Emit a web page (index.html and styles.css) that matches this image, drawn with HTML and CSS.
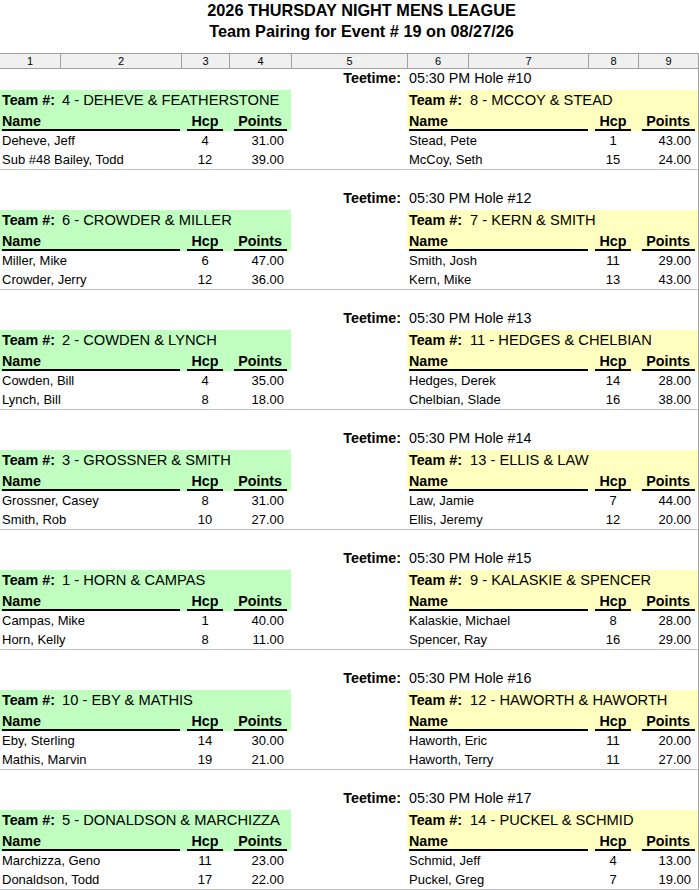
FILE: index.html
```html
<!DOCTYPE html>
<html lang="en">
<head>
<meta charset="utf-8">
<title>Team Pairing for Event # 19</title>
<link rel="stylesheet" href="styles.css">
</head>
<body>
<div class="page">
  <header class="title">
    <div class="title-line">2026 THURSDAY NIGHT MENS LEAGUE</div>
    <div class="title-line">Team Pairing for Event # 19 on 08/27/26</div>
  </header>
  <div class="sheet">
    <div class="ruler">
      <div class="rcell">1</div><div class="rcell">2</div><div class="rcell">3</div><div class="rcell">4</div><div class="rcell">5</div><div class="rcell">6</div><div class="rcell">7</div><div class="rcell">8</div><div class="rcell">9</div>
    </div>

    <section class="block">
      <div class="teetime"><span class="tt-label">Teetime:</span><span class="tt-value">05:30 PM Hole #10</span></div>
      <div class="teams">
        <div class="team left">
          <div class="team-head green"><div class="row team-row"><span class="lbl">Team #:</span><span class="tname">4 - DEHEVE &amp; FEATHERSTONE</span></div>
          <div class="row hdr-row"><span class="h-name"><span class="ul">Name</span></span><span class="h-hcp"><span class="ul w-hcp">Hcp</span></span><span class="h-pts"><span class="ul w-pts">Points</span></span></div></div>
          <div class="row p-row"><span class="p-name">Deheve, Jeff</span><span class="p-hcp">4</span><span class="p-pts">31.00</span></div>
          <div class="row p-row"><span class="p-name">Sub #48 Bailey, Todd</span><span class="p-hcp">12</span><span class="p-pts">39.00</span></div>
        </div>
        <div class="gapcol"></div>
        <div class="team right">
          <div class="team-head yellow"><div class="row team-row"><span class="lbl">Team #:</span><span class="tname">8 - MCCOY &amp; STEAD</span></div>
          <div class="row hdr-row"><span class="h-name"><span class="ul">Name</span></span><span class="h-hcp"><span class="ul w-hcp">Hcp</span></span><span class="h-pts"><span class="ul w-pts">Points</span></span></div></div>
          <div class="row p-row"><span class="p-name">Stead, Pete</span><span class="p-hcp">1</span><span class="p-pts">43.00</span></div>
          <div class="row p-row"><span class="p-name">McCoy, Seth</span><span class="p-hcp">15</span><span class="p-pts">24.00</span></div>
        </div>
      </div>
      <div class="sep"></div>
    </section>

    <section class="block">
      <div class="teetime"><span class="tt-label">Teetime:</span><span class="tt-value">05:30 PM Hole #12</span></div>
      <div class="teams">
        <div class="team left">
          <div class="team-head green"><div class="row team-row"><span class="lbl">Team #:</span><span class="tname">6 - CROWDER &amp; MILLER</span></div>
          <div class="row hdr-row"><span class="h-name"><span class="ul">Name</span></span><span class="h-hcp"><span class="ul w-hcp">Hcp</span></span><span class="h-pts"><span class="ul w-pts">Points</span></span></div></div>
          <div class="row p-row"><span class="p-name">Miller, Mike</span><span class="p-hcp">6</span><span class="p-pts">47.00</span></div>
          <div class="row p-row"><span class="p-name">Crowder, Jerry</span><span class="p-hcp">12</span><span class="p-pts">36.00</span></div>
        </div>
        <div class="gapcol"></div>
        <div class="team right">
          <div class="team-head yellow"><div class="row team-row"><span class="lbl">Team #:</span><span class="tname">7 - KERN &amp; SMITH</span></div>
          <div class="row hdr-row"><span class="h-name"><span class="ul">Name</span></span><span class="h-hcp"><span class="ul w-hcp">Hcp</span></span><span class="h-pts"><span class="ul w-pts">Points</span></span></div></div>
          <div class="row p-row"><span class="p-name">Smith, Josh</span><span class="p-hcp">11</span><span class="p-pts">29.00</span></div>
          <div class="row p-row"><span class="p-name">Kern, Mike</span><span class="p-hcp">13</span><span class="p-pts">43.00</span></div>
        </div>
      </div>
      <div class="sep"></div>
    </section>

    <section class="block">
      <div class="teetime"><span class="tt-label">Teetime:</span><span class="tt-value">05:30 PM Hole #13</span></div>
      <div class="teams">
        <div class="team left">
          <div class="team-head green"><div class="row team-row"><span class="lbl">Team #:</span><span class="tname">2 - COWDEN &amp; LYNCH</span></div>
          <div class="row hdr-row"><span class="h-name"><span class="ul">Name</span></span><span class="h-hcp"><span class="ul w-hcp">Hcp</span></span><span class="h-pts"><span class="ul w-pts">Points</span></span></div></div>
          <div class="row p-row"><span class="p-name">Cowden, Bill</span><span class="p-hcp">4</span><span class="p-pts">35.00</span></div>
          <div class="row p-row"><span class="p-name">Lynch, Bill</span><span class="p-hcp">8</span><span class="p-pts">18.00</span></div>
        </div>
        <div class="gapcol"></div>
        <div class="team right">
          <div class="team-head yellow"><div class="row team-row"><span class="lbl">Team #:</span><span class="tname">11 - HEDGES &amp; CHELBIAN</span></div>
          <div class="row hdr-row"><span class="h-name"><span class="ul">Name</span></span><span class="h-hcp"><span class="ul w-hcp">Hcp</span></span><span class="h-pts"><span class="ul w-pts">Points</span></span></div></div>
          <div class="row p-row"><span class="p-name">Hedges, Derek</span><span class="p-hcp">14</span><span class="p-pts">28.00</span></div>
          <div class="row p-row"><span class="p-name">Chelbian, Slade</span><span class="p-hcp">16</span><span class="p-pts">38.00</span></div>
        </div>
      </div>
      <div class="sep"></div>
    </section>

    <section class="block">
      <div class="teetime"><span class="tt-label">Teetime:</span><span class="tt-value">05:30 PM Hole #14</span></div>
      <div class="teams">
        <div class="team left">
          <div class="team-head green"><div class="row team-row"><span class="lbl">Team #:</span><span class="tname">3 - GROSSNER &amp; SMITH</span></div>
          <div class="row hdr-row"><span class="h-name"><span class="ul">Name</span></span><span class="h-hcp"><span class="ul w-hcp">Hcp</span></span><span class="h-pts"><span class="ul w-pts">Points</span></span></div></div>
          <div class="row p-row"><span class="p-name">Grossner, Casey</span><span class="p-hcp">8</span><span class="p-pts">31.00</span></div>
          <div class="row p-row"><span class="p-name">Smith, Rob</span><span class="p-hcp">10</span><span class="p-pts">27.00</span></div>
        </div>
        <div class="gapcol"></div>
        <div class="team right">
          <div class="team-head yellow"><div class="row team-row"><span class="lbl">Team #:</span><span class="tname">13 - ELLIS &amp; LAW</span></div>
          <div class="row hdr-row"><span class="h-name"><span class="ul">Name</span></span><span class="h-hcp"><span class="ul w-hcp">Hcp</span></span><span class="h-pts"><span class="ul w-pts">Points</span></span></div></div>
          <div class="row p-row"><span class="p-name">Law, Jamie</span><span class="p-hcp">7</span><span class="p-pts">44.00</span></div>
          <div class="row p-row"><span class="p-name">Ellis, Jeremy</span><span class="p-hcp">12</span><span class="p-pts">20.00</span></div>
        </div>
      </div>
      <div class="sep"></div>
    </section>

    <section class="block">
      <div class="teetime"><span class="tt-label">Teetime:</span><span class="tt-value">05:30 PM Hole #15</span></div>
      <div class="teams">
        <div class="team left">
          <div class="team-head green"><div class="row team-row"><span class="lbl">Team #:</span><span class="tname">1 - HORN &amp; CAMPAS</span></div>
          <div class="row hdr-row"><span class="h-name"><span class="ul">Name</span></span><span class="h-hcp"><span class="ul w-hcp">Hcp</span></span><span class="h-pts"><span class="ul w-pts">Points</span></span></div></div>
          <div class="row p-row"><span class="p-name">Campas, Mike</span><span class="p-hcp">1</span><span class="p-pts">40.00</span></div>
          <div class="row p-row"><span class="p-name">Horn, Kelly</span><span class="p-hcp">8</span><span class="p-pts">11.00</span></div>
        </div>
        <div class="gapcol"></div>
        <div class="team right">
          <div class="team-head yellow"><div class="row team-row"><span class="lbl">Team #:</span><span class="tname">9 - KALASKIE &amp; SPENCER</span></div>
          <div class="row hdr-row"><span class="h-name"><span class="ul">Name</span></span><span class="h-hcp"><span class="ul w-hcp">Hcp</span></span><span class="h-pts"><span class="ul w-pts">Points</span></span></div></div>
          <div class="row p-row"><span class="p-name">Kalaskie, Michael</span><span class="p-hcp">8</span><span class="p-pts">28.00</span></div>
          <div class="row p-row"><span class="p-name">Spencer, Ray</span><span class="p-hcp">16</span><span class="p-pts">29.00</span></div>
        </div>
      </div>
      <div class="sep"></div>
    </section>

    <section class="block">
      <div class="teetime"><span class="tt-label">Teetime:</span><span class="tt-value">05:30 PM Hole #16</span></div>
      <div class="teams">
        <div class="team left">
          <div class="team-head green"><div class="row team-row"><span class="lbl">Team #:</span><span class="tname">10 - EBY &amp; MATHIS</span></div>
          <div class="row hdr-row"><span class="h-name"><span class="ul">Name</span></span><span class="h-hcp"><span class="ul w-hcp">Hcp</span></span><span class="h-pts"><span class="ul w-pts">Points</span></span></div></div>
          <div class="row p-row"><span class="p-name">Eby, Sterling</span><span class="p-hcp">14</span><span class="p-pts">30.00</span></div>
          <div class="row p-row"><span class="p-name">Mathis, Marvin</span><span class="p-hcp">19</span><span class="p-pts">21.00</span></div>
        </div>
        <div class="gapcol"></div>
        <div class="team right">
          <div class="team-head yellow"><div class="row team-row"><span class="lbl">Team #:</span><span class="tname">12 - HAWORTH &amp; HAWORTH</span></div>
          <div class="row hdr-row"><span class="h-name"><span class="ul">Name</span></span><span class="h-hcp"><span class="ul w-hcp">Hcp</span></span><span class="h-pts"><span class="ul w-pts">Points</span></span></div></div>
          <div class="row p-row"><span class="p-name">Haworth, Eric</span><span class="p-hcp">11</span><span class="p-pts">20.00</span></div>
          <div class="row p-row"><span class="p-name">Haworth, Terry</span><span class="p-hcp">11</span><span class="p-pts">27.00</span></div>
        </div>
      </div>
      <div class="sep"></div>
    </section>

    <section class="block">
      <div class="teetime"><span class="tt-label">Teetime:</span><span class="tt-value">05:30 PM Hole #17</span></div>
      <div class="teams">
        <div class="team left">
          <div class="team-head green"><div class="row team-row"><span class="lbl">Team #:</span><span class="tname">5 - DONALDSON &amp; MARCHIZZA</span></div>
          <div class="row hdr-row"><span class="h-name"><span class="ul">Name</span></span><span class="h-hcp"><span class="ul w-hcp">Hcp</span></span><span class="h-pts"><span class="ul w-pts">Points</span></span></div></div>
          <div class="row p-row"><span class="p-name">Marchizza, Geno</span><span class="p-hcp">11</span><span class="p-pts">23.00</span></div>
          <div class="row p-row"><span class="p-name">Donaldson, Todd</span><span class="p-hcp">17</span><span class="p-pts">22.00</span></div>
        </div>
        <div class="gapcol"></div>
        <div class="team right">
          <div class="team-head yellow"><div class="row team-row"><span class="lbl">Team #:</span><span class="tname">14 - PUCKEL &amp; SCHMID</span></div>
          <div class="row hdr-row"><span class="h-name"><span class="ul">Name</span></span><span class="h-hcp"><span class="ul w-hcp">Hcp</span></span><span class="h-pts"><span class="ul w-pts">Points</span></span></div></div>
          <div class="row p-row"><span class="p-name">Schmid, Jeff</span><span class="p-hcp">4</span><span class="p-pts">13.00</span></div>
          <div class="row p-row"><span class="p-name">Puckel, Greg</span><span class="p-hcp">7</span><span class="p-pts">19.00</span></div>
        </div>
      </div>
      <div class="sep"></div>
    </section>
  </div>
</div>
</body>
</html>
```

FILE: styles.css
```css
* { box-sizing: border-box; }
html, body { margin: 0; padding: 0; background: #fff; }
body {
  font-family: "Liberation Sans", Arial, sans-serif;
  color: #000;
  overflow: hidden;
}
.page { width: 699px; }

.title {
  padding: 0 0 11px 24px;
  text-align: center;
  font-weight: bold;
  font-size: 16.3px;
  line-height: 21px;
}

.sheet {
  width: 699px;
  border-right: 1px solid #a0a0a0;
}

.ruler {
  display: grid;
  grid-template-columns: 60px 121px 48px 62px 116px 61px 120px 50px 60px;
  height: 16px;
  border-top: 1px solid #a0a0a0;
  border-bottom: 1px solid #a0a0a0;
  background: #f0f0f0;
  margin-bottom: 1px;
}
.rcell {
  font-size: 11px;
  line-height: 14px;
  text-align: center;
}
.rcell + .rcell { border-left: 1px solid #a0a0a0; }

.block { height: 120px; }

.teetime {
  display: grid;
  grid-template-columns: 407px 1fr;
  height: 20px;
  line-height: 17px;
  font-size: 14.3px;
}
.tt-label { font-weight: bold; text-align: right; padding-right: 6px; }
.tt-value { padding-left: 2px; }

.teams {
  display: grid;
  grid-template-columns: 291px 116px 291px;
}

.team.left { --cols: 60px 121px 48px 62px; }
.team.right { --cols: 61px 120px 50px 60px; }

.green { background: #c0ffc0; }
.yellow { background: #ffffc0; }

.row {
  display: grid;
  grid-template-columns: var(--cols);
  white-space: nowrap;
}

.team-row {
  height: 20px;
  line-height: 20px;
  font-size: 14.3px;
}
.lbl { font-weight: bold; padding-left: 2px; }
.tname { grid-column: 2 / 5; padding-left: 2px; font-size: 14.7px; }

.hdr-row {
  height: 21px;
  line-height: 16px;
  font-size: 14.3px;
  font-weight: bold;
  padding-top: 3px;
}
.h-name { grid-column: 1 / 3; padding-left: 2px; padding-right: 1px; }
.right .h-name { padding-right: 0; }
.h-hcp, .h-pts { text-align: center; }
.ul {
  display: block;
  border-bottom: 2px solid #000;
}
.w-hcp { display: inline-block; width: 36px; }
.w-pts { display: inline-block; width: 53px; }

.p-row {
  height: 19px;
  padding-top: 1px;
  line-height: 18px;
  font-size: 13px;
}
.p-name { grid-column: 1 / 3; padding-left: 2px; }
.p-hcp { text-align: center; }
.p-pts { text-align: right; padding-right: 7px; }

.sep {
  height: 1px;
  background: #c0c0c0;
}
```
